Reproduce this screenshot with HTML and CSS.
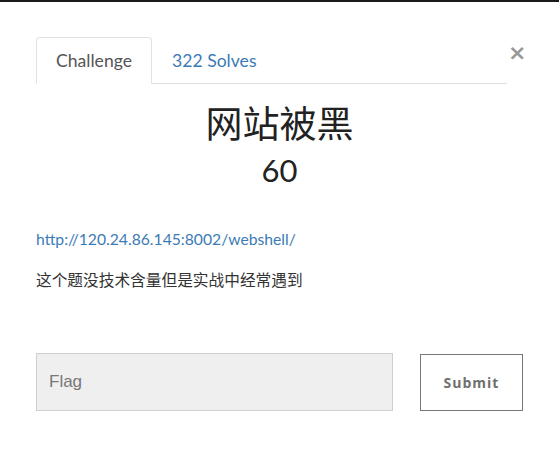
FILE: index.html
```html
<!DOCTYPE html>
<html lang="zh-CN">
<head>
  <meta charset="UTF-8">
  <meta name="viewport" content="width=device-width, initial-scale=1.0">
  <title>网站被黑</title>
  <link rel="stylesheet" href="styles.css">
</head>
<body>

  <!-- Challenge modal -->
  <div class="modal">
    <div class="modal-top">
      <ul class="tabs">
        <li class="tab active">Challenge</li>
        <li class="tab"><a href="#solves">322 Solves</a></li>
      </ul>
      <button class="close" aria-label="Close">&times;</button>
    </div>

    <h2 class="challenge-name">网站被黑</h2>
    <h3 class="challenge-value">60</h3>

    <div class="challenge-desc">
      <p><a href="#">http://120.24.86.145:8002/webshell/</a></p>
      <p>这个题没技术含量但是实战中经常遇到</p>
    </div>

    <form class="flag-row">
      <input type="text" class="flag-input" placeholder="Flag">
      <button type="button" class="submit">Submit</button>
    </form>
  </div>

</body>
</html>
```

FILE: styles.css
```css
body {
  margin: 0;
  font-family: Lato, "Noto Sans CJK SC", sans-serif;
  color: #333;
  background-color: #fff;
  border-top: 2px solid #1a1a1a;
}

.modal {
  padding: 35px 36px 0 36px;
}

.modal-top {
  display: flex;
  align-items: flex-start;
}

.tabs {
  flex: 1;
  display: flex;
  list-style: none;
  margin: 0;
  padding: 0;
  border-bottom: 1px solid #dedede;
}

.tab {
  font-size: 17.6px;
  line-height: 20px;
  padding: 13px 19px 12px 19px;
  border: 1px solid transparent;
  border-top-left-radius: 4px;
  border-top-right-radius: 4px;
  margin-bottom: -1px;
  color: #555;
}

.tab.active {
  border-color: #e2e2e2 #e2e2e2 #fff;
  background-color: #fff;
}

.tab a {
  color: #3b7bb5;
  text-decoration: none;
}

.close {
  background: none;
  border: none;
  padding: 0;
  margin: 6px 1px 0 1px;
  width: 14px;
  font-size: 22px;
  line-height: 20px;
  font-weight: bold;
  font-family: "DejaVu Sans", sans-serif;
  color: #999;
  cursor: pointer;
}

.challenge-name {
  margin: 17px 0 0 0;
  text-align: center;
  font-size: 37px;
  line-height: 46px;
  font-weight: normal;
  color: #222;
}

.challenge-value {
  margin: 0;
  text-align: center;
  font-size: 31px;
  line-height: 46px;
  font-weight: normal;
  color: #222;
}

.challenge-desc {
  margin-top: 37px;
  font-size: 15.7px;
}

.challenge-desc p {
  margin: 0 0 22px 0;
  line-height: 19px;
}

.challenge-desc a {
  color: #3b7bb5;
  text-decoration: none;
}

.flag-row {
  display: flex;
  align-items: center;
  gap: 27px;
  margin-top: 63px;
}

.flag-input {
  flex: 1;
  height: 58px;
  box-sizing: border-box;
  padding: 0 12px;
  font-family: "Liberation Sans", Arial, sans-serif;
  font-size: 17px;
  background-color: #efefef;
  border: 1px solid #cfcfcf;
  outline: none;
}

.flag-input::placeholder {
  color: #777;
}

.submit {
  width: 103px;
  height: 57px;
  background-color: #fff;
  border: 1px solid #777;
  font-family: "Open Sans", sans-serif;
  font-weight: bold;
  font-size: 14px;
  letter-spacing: 1px;
  color: #707070;
  cursor: pointer;
}
```
